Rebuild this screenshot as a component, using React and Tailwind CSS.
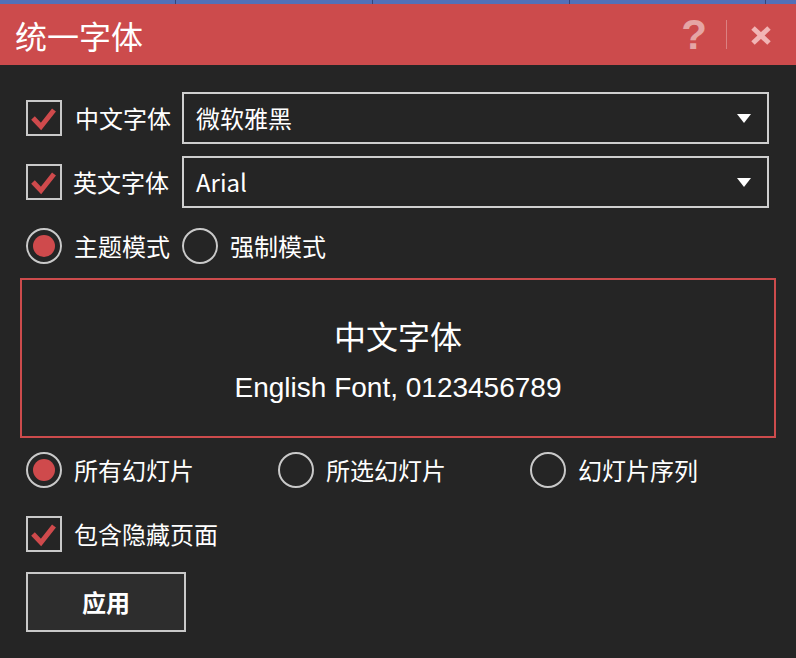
import React from "react";

const CJK = { fontFamily: '"Noto Sans CJK SC", "Noto Sans", sans-serif' };

function Check() {
  return (
    <div className="w-[36px] h-[36px] border-2 border-[#c9c9c9] shrink-0 flex items-center justify-center">
      <svg width="32" height="32" viewBox="0 0 32 32">
        <polyline points="5,16 13,24.5 26,8" fill="none" stroke="#cf4a4c" strokeWidth="5" />
      </svg>
    </div>
  );
}

function Radio({ on }) {
  return (
    <div className="w-[36px] h-[36px] rounded-full border-2 border-[#c9c9c9] shrink-0 flex items-center justify-center">
      {on && <div className="w-[22px] h-[22px] rounded-full bg-[#cf4a4c]" />}
    </div>
  );
}

function Select({ value }) {
  return (
    <div className="flex-1 h-[52px] border-2 border-[#cfcfcf] flex items-center justify-between pl-[12px] pr-[16px]">
      <span className="text-[24px] text-white leading-none" style={CJK}>{value}</span>
      <svg width="14" height="9" viewBox="0 0 14 9">
        <polygon points="0,0 14,0 7,9" fill="#ffffff" />
      </svg>
    </div>
  );
}

export default function App() {
  return (
    <div className="w-[796px] h-[658px] flex flex-col bg-[#252525] text-white overflow-hidden" style={CJK}>
      <div className="h-[4px] flex bg-[#5370b8] shrink-0">
        <div className="w-[176px] border-r border-[#34467a]" />
        <div className="w-[197px] border-r border-[#34467a]" />
        <div className="w-[197px] border-r border-[#34467a]" />
        <div className="w-[196px] border-r border-[#34467a]" />
      </div>
      <div className="h-[61px] bg-[#cc4b4c] flex items-center pl-[15px] pr-[24px] shrink-0">
        <span className="text-[32px] leading-none text-white">统一字体</span>
        <div className="flex-1" />
        <span
          className="text-[42px] font-bold leading-none text-white/50 mt-[1px]"
          style={{ fontFamily: '"Liberation Sans", Arial, sans-serif' }}
        >
          ?
        </span>
        <div className="w-[1px] h-[29px] bg-white/30 ml-[19px] mr-[23px]" />
        <svg width="22" height="19" viewBox="0 0 22 19" className="mt-[1px]">
          <line x1="3" y1="2" x2="19" y2="17" stroke="#f1b5b5" strokeWidth="5" />
          <line x1="19" y1="2" x2="3" y2="17" stroke="#f1b5b5" strokeWidth="5" />
        </svg>
      </div>

      <div className="flex flex-col pl-[26px] pr-[27px] pt-[27px]">
        <div className="flex items-center h-[52px]">
          <Check />
          <span className="ml-[13px] w-[107px] text-[24px] leading-none">中文字体</span>
          <Select value="微软雅黑" />
        </div>
        <div className="flex items-center h-[52px] mt-[12px]">
          <Check />
          <span className="ml-[11px] w-[109px] text-[24px] leading-none">英文字体</span>
          <Select value="Arial" />
        </div>
        <div className="flex items-center h-[36px] mt-[20px]">
          <Radio on />
          <span className="ml-[12px] w-[108px] text-[24px] leading-none">主题模式</span>
          <Radio />
          <span className="ml-[12px] text-[24px] leading-none">强制模式</span>
        </div>

        <div className="-ml-[6px] -mr-[7px] mt-[14px] h-[160px] border-2 border-[#cc4b4c] flex flex-col items-center pt-[34px]">
          <div className="text-[32px] leading-[42px]">中文字体</div>
          <div
            className="text-[28px] leading-[34px] mt-[15px]"
            style={{ fontFamily: '"Liberation Sans", Arial, sans-serif' }}
          >
            English Font, 0123456789
          </div>
        </div>

        <div className="grid grid-cols-[252px_252px_240px] mt-[14px] h-[36px]">
          <div className="flex items-center">
            <Radio on />
            <span className="ml-[12px] text-[24px] leading-none">所有幻灯片</span>
          </div>
          <div className="flex items-center">
            <Radio />
            <span className="ml-[12px] text-[24px] leading-none">所选幻灯片</span>
          </div>
          <div className="flex items-center">
            <Radio />
            <span className="ml-[12px] text-[24px] leading-none">幻灯片序列</span>
          </div>
        </div>

        <div className="flex items-center h-[36px] mt-[28px]">
          <Check />
          <span className="ml-[12px] text-[24px] leading-none">包含隐藏页面</span>
        </div>

        <div className="mt-[20px] w-[160px] h-[60px] border-2 border-[#c9c9c9] bg-[#2d2d2d] flex items-center justify-center">
          <span className="text-[24px] font-bold leading-none">应用</span>
        </div>
      </div>
    </div>
  );
}
